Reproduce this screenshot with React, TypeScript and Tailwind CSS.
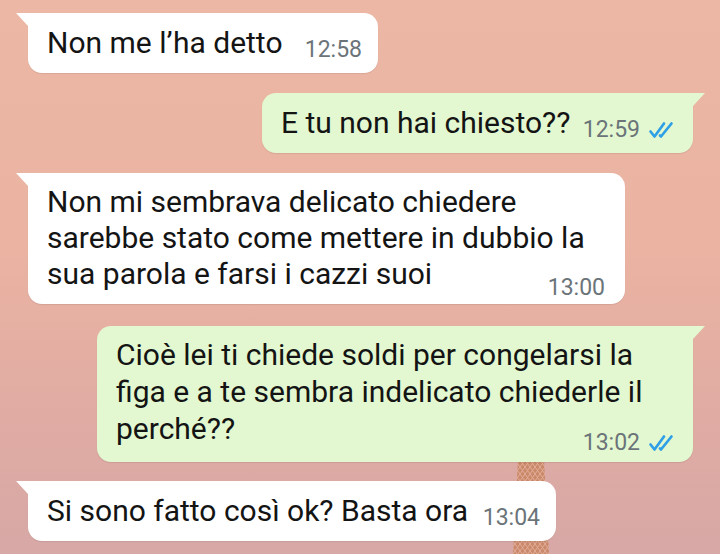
import type { ReactNode } from 'react';

function Ticks() {
    return (
        <svg width="29" height="18" viewBox="0 0 29 18" fill="none" stroke="#2f9fe6" strokeWidth="2.7" strokeLinecap="round" strokeLinejoin="round">
            <path d="M2.5 10.5 L6.5 15.5 L16 2.5" />
            <path d="M12 14.5 L13 15.5 L23.5 2.5" />
        </svg>
    );
}

function Tower() {
    // the bit of tower peeking out behind the last messages
    return (
        <svg className="absolute left-[505px] top-[460px]" width="52" height="94" viewBox="0 0 52 94">
            <defs>
                <pattern id="lattice" width="5" height="7" patternUnits="userSpaceOnUse">
                    <rect width="5" height="7" fill="#c7835f" />
                    <path d="M0 0 L5 7 M5 0 L0 7" stroke="#e4ae97" strokeWidth="1" />
                </pattern>
            </defs>
            <path d="M13 0 L39 0 L44 94 L8 94 Z" fill="url(#lattice)" opacity="0.85" />
        </svg>
    );
}

function Bubble({ out, className, children }: { out?: boolean; className: string; children: ReactNode }) {
    return (
        <div
            className={`relative rounded-[14px] shadow-[0_1px_1px_rgba(0,0,0,0.08)] ${
                out ? 'self-end rounded-tr-none bg-[#e3f8d0]' : 'self-start rounded-tl-none bg-white'
            } ${className}`}
        >
            <span
                className={`absolute top-0 h-[13px] w-[12px] ${
                    out
                        ? 'right-[-12px] bg-[#e3f8d0] [clip-path:polygon(0_0,100%_0,0_100%)]'
                        : 'left-[-12px] bg-white [clip-path:polygon(0_0,100%_0,100%_100%)]'
                }`}
            />
            {children}
        </div>
    );
}

const text = "font-['Roboto',sans-serif] text-[30px] leading-[36px] text-[#141414]";
const time = "font-['Roboto',sans-serif] text-[23px] leading-[22px] text-[#6b7479] whitespace-nowrap";

export default function App() {
    return (
        <div className="relative h-[554px] w-[720px] overflow-hidden bg-[linear-gradient(180deg,#ecb7a4_0%,#eab3a2_45%,#e0aba3_75%,#d7a8a6_100%)]">
            <Tower />
            <div className="relative flex flex-col pt-[13px]">
                {/* 12:58 */}
                <Bubble className="ml-[28px] w-[350px] pl-[19px] pr-[16px] py-[12px]">
                    <div className="flex items-end">
                        <span className={text}>Non me l’ha detto</span>
                        <span className={`${time} ml-auto`}>12:58</span>
                    </div>
                </Bubble>

                {/* 12:59 */}
                <Bubble out className="mt-[20px] mr-[27px] w-[431px] pl-[19px] pr-[16px] py-[12px]">
                    <div className="flex items-end">
                        <span className={text}>E tu non hai chiesto??</span>
                        <span className={`${time} ml-auto flex items-center gap-[8px]`}>
                            12:59
                            <Ticks />
                        </span>
                    </div>
                </Bubble>

                {/* 13:00 */}
                <Bubble className="mt-[20px] ml-[28px] w-[597px] pl-[19px] pr-[20px] pt-[11px] pb-[12px]">
                    <div className={`${text} leading-[36.5px]`}>Non mi sembrava delicato chiedere</div>
                    <div className={`${text} leading-[36.5px]`}>sarebbe stato come mettere in dubbio la</div>
                    <div className="flex items-end">
                        <span className={`${text} leading-[36.5px]`}>sua parola e farsi i cazzi suoi</span>
                        <span className={`${time} ml-auto mb-[-7px]`}>13:00</span>
                    </div>
                </Bubble>

                {/* 13:02 */}
                <Bubble out className="mt-[22px] mr-[27px] w-[596px] pl-[19px] pr-[16px] pt-[10px] pb-[15px]">
                    <div className={`${text} leading-[37px]`}>Cioè lei ti chiede soldi per congelarsi la</div>
                    <div className={`${text} leading-[37px]`}>figa e a te sembra indelicato chiederle il</div>
                    <div className="flex items-end">
                        <span className={`${text} leading-[37px]`}>perché??</span>
                        <span className={`${time} ml-auto mb-[-7px] flex items-center gap-[8px]`}>
                            13:02
                            <Ticks />
                        </span>
                    </div>
                </Bubble>

                {/* 13:04 */}
                <Bubble className="mt-[19px] ml-[28px] w-[528px] pl-[19px] pr-[16px] py-[12px]">
                    <div className="flex items-end">
                        <span className={text}>Si sono fatto così ok? Basta ora</span>
                        <span className={`${time} ml-auto`}>13:04</span>
                    </div>
                </Bubble>
            </div>
        </div>
    );
}
